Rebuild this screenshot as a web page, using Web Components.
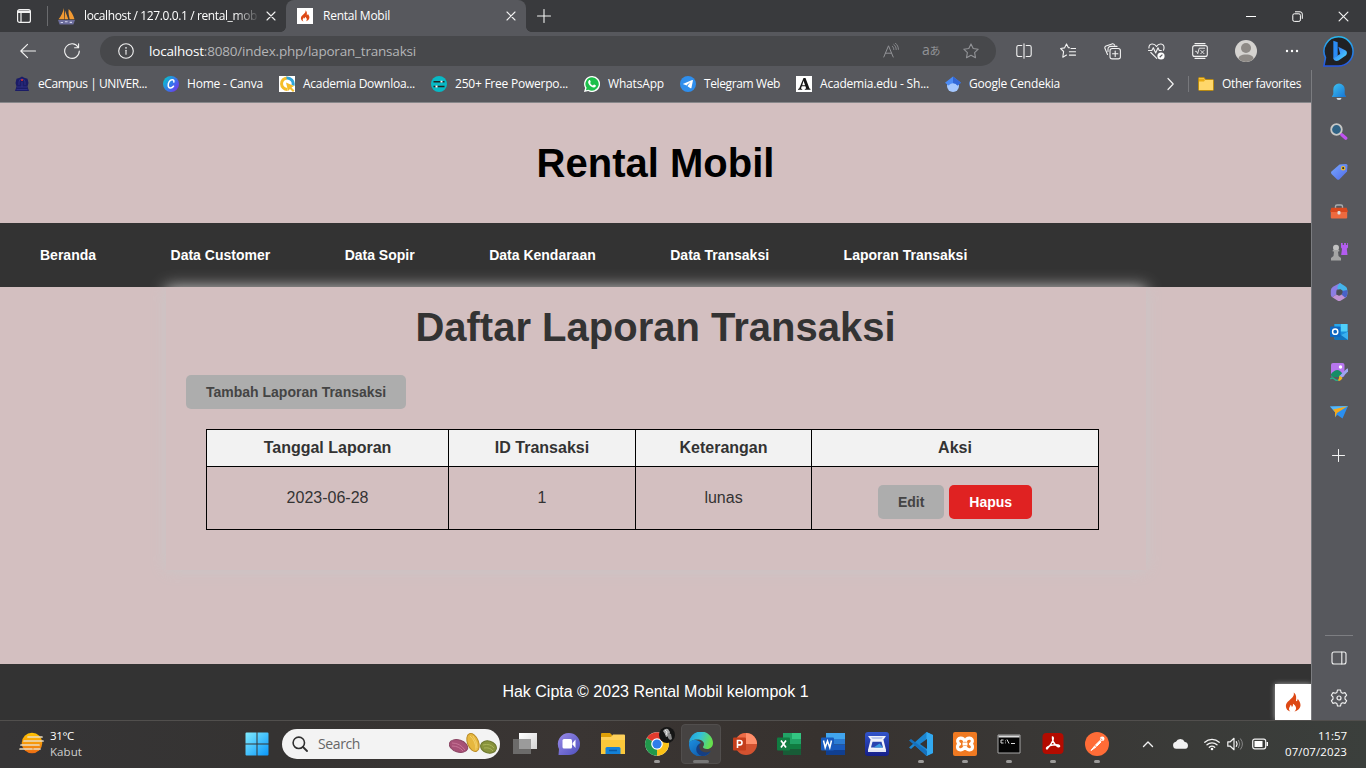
<!DOCTYPE html>
<html lang="id">
<head>
<meta charset="utf-8">
<title>Rental Mobil</title>
<style>
html,body{margin:0;padding:0}
body{width:1366px;height:768px;overflow:hidden;font-family:"Liberation Sans",Arial,sans-serif}
</style>
</head>
<body>
<desktop-screen></desktop-screen>
<script>
const define = (name, html) => customElements.define(name, class extends HTMLElement {
  connectedCallback() {
    if (this.shadowRoot) return;
    this.attachShadow({ mode: 'open' }).innerHTML = html;
  }
});

/* Icon drawings: [viewBox size, markup] */
const S = 'fill="none" stroke="#f2f2f2" stroke-linecap="round" stroke-linejoin="round"';
const ICONS = {
  tabs: [16, `<g ${S} stroke-width="1.2"><rect x="1.6" y="1.6" width="12.8" height="12.8" rx="2"/><path d="M2 4.5h12M5 4.5v10" /></g><path d="M2 2.6h12v2H2z" fill="#f2f2f2"/>`],
  close: [10, `<path d="M1 1l8 8M9 1l-8 8" ${S} stroke-width="1.1"/>`],
  plus: [14, `<path d="M7 .5v13M.5 7h13" ${S} stroke-width="1.1"/>`],
  min: [10, `<path d="M0 5.5h10" stroke="#fff" stroke-width="1"/>`],
  restore: [11, `<g fill="none" stroke="#fff"><rect x=".8" y="2.8" width="7.6" height="7.6" rx="1.5"/><path d="M3 .8h5a2.3 2.3 0 0 1 2.3 2.3v4.7"/></g>`],
  pma: [16, `<path d="M5.500 0C4.800 4 3 7.500.5 10.500H6zM6.500 2v8.500h3.200zM10 1c-.5 4 .5 7 1 9.500h4.500C14.500 7 12.500 3 10 1z" fill="#f39a32"/><path d="M0 11.200h16l-1.500 4.300h-13z" fill="#6c6d9c"/><path d="M2.500 13.700h2.200M6.500 13h2.500M11 13.500h2.200" stroke="#d4d5ee"/>`],
  flame: [16, `<path d="M8.600.3c.5 2.200-.4 3.300-2 4.900C4.900 7 2.300 8.500 2.300 11.300c0 2.100 1.500 3.700 3.600 4.300-1.300-1-1.400-2.700-.5-3.900.3-.4.6-.8.6-1.500.8.4 1.100 1.100 1 1.900.8-.6 1.200-1.600.9-2.700 1.900.8 3.500 3.700 2 5.300-.3.400-.7.700-1.100.9 3.100-.6 5.200-2.700 5.200-5.300 0-2.100-1.300-3.600-2.300-5 .1 1.100-.3 1.900-1.300 2C10.500 5.300 11.200 2.200 8.600.3z" fill="#dd4814"/>`],
  flamebox: [16, `<path d="M0 0h16v16H0z" fill="#fff"/><path transform="translate(2.200 2) scale(.73)" d="M8.600.3c.5 2.200-.4 3.300-2 4.900C4.900 7 2.300 8.500 2.300 11.300c0 2.100 1.500 3.700 3.600 4.300-1.300-1-1.400-2.700-.5-3.900.3-.4.6-.8.6-1.500.8.4 1.100 1.100 1 1.900.8-.6 1.200-1.600.9-2.700 1.900.8 3.500 3.700 2 5.300-.3.400-.7.700-1.100.9 3.100-.6 5.200-2.700 5.200-5.300 0-2.100-1.300-3.600-2.300-5 .1 1.100-.3 1.900-1.300 2C10.500 5.300 11.200 2.200 8.600.3z" fill="#dd4814"/>`],
  back: [16, `<path d="M15.500 8H.8M7.500 1.300L.8 8l6.700 6.700" ${S} stroke-width="1.1"/>`],
  reload: [16, `<path d="M14.200 4.200A7.300 7.300 0 1 0 15.300 8M14.600.8v4h-4" ${S} stroke-width="1.1"/>`],
  info: [16, `<circle cx="8" cy="8" r="7.300" ${S} stroke-width="1.100"/><path d="M8 7.200v4" ${S} stroke-width="1.100"/><circle cx="8" cy="4.900" r=".8" fill="#f2f2f2"/>`],
  read: [16, `<g fill="none" stroke="#929397" stroke-linecap="round"><path d="M.8 14L5.500 2.800 10.200 14M2.500 10.200h6"/><path d="M9.300 3.200c1 .8 1.500 2 1.500 3.300M10.800 1.500c1.600 1.300 2.400 3 2.400 5M12.400.2C14.400 1.900 15.400 4 15.400 6.400" stroke-width=".9"/></g>`],
  star: [16, `<path d="M8 .9l2.200 4.600 5 .7-3.600 3.500.9 5L8 12.300l-4.500 2.400.9-5L.8 6.200l5-.7z" fill="none" stroke="#929397" stroke-linejoin="round" stroke-width="1.100"/>`],
  split: [16, `<g ${S} stroke-width="1.100"><path d="M8 .8v14.400M5.800 2.500H2.500A1.700 1.700 0 0 0 .8 4.200v7.600a1.700 1.700 0 0 0 1.700 1.700h3.300M10.200 2.500h3.300a1.700 1.700 0 0 1 1.700 1.700v7.600a1.700 1.700 0 0 1-1.700 1.700h-3.300"/></g>`],
  favs: [16, `<path d="M9.500 4.800L8.300 4.600 6.500.9 4.500 4.900.6 5.500l3 3-.8 5.700 3.700-2.100M11 5.500h4.600M9.400 8.800h6.200M9.400 12.100h6.200" ${S} stroke-width="1.100"/>`],
  collect: [17, `<g ${S} stroke-width="1.100"><rect x="6" y="5.500" width="10.400" height="10.400" rx="2.200"/><path d="M11.200 8v5.400M8.500 10.700h5.400M3.500 11.500L1 5.500a1.900 1.900 0 0 1 1-2.500L8 .9c1.200-.3 2 .1 2.600 1.200M4 8.500V6a2.600 2.600 0 0 1 2.600-2.600H13"/></g>`],
  heart: [17, `<path d="M8.500 3.500C7.300 1.500 5.500.9 4 1 2.200 1.200.9 2.700.9 5M8.500 3.500C9.700 1.500 11.500.9 13 1c1.800.2 3.200 1.800 3 4.300 0 .8-.3 1.400-.6 2M2.800 9.500l5.900 5.800M.5 7.500h3.300l1.500-2.800 2.400 5.300 2.300-5.300 1.300 2.800h2" ${S} stroke-width="1.100"/><circle cx="13" cy="13" r="3.600" fill="#fff"/><path d="M11.700 14.200l2.700-2.600" stroke="#57585d" stroke-width="1.200"/>`],
  math: [16, `<g ${S}><rect x=".7" y="2.600" width="14.600" height="10.800" rx="2" stroke-width="1.100"/><path d="M3 .7h10M3 15.300h10" stroke-width="1.200"/><path d="M3.500 8.300h1l1.200 2.400L7.200 5.200h5.500M8.800 7.500l3.200 3.200M12 7.500l-3.200 3.200" stroke-width=".9"/></g>`],
  user: [22, `<circle cx="11" cy="11" r="11" fill="#d5d3d0"/><circle cx="11" cy="8" r="5" fill="#8e8a86"/><path d="M3.500 19c0-3 2.500-4.500 7.500-4.500s7.500 1.500 7.500 4.500A11 11 0 0 1 3.500 19z" fill="#8e8a86"/>`],
  dots: [16, `<g fill="#fff"><circle cx="3" cy="8" r="1.200"/><circle cx="8" cy="8" r="1.200"/><circle cx="13" cy="8" r="1.200"/></g>`],
  bing: [30, `<defs><linearGradient id="a" x2="0" y2="1"><stop stop-color="#28b7ee"/><stop offset="1" stop-color="#2455df"/></linearGradient><linearGradient id="b" x2="1" y2="1"><stop stop-color="#2f66f4"/><stop offset="1" stop-color="#4de1ff"/></linearGradient></defs><path d="M15 .8A14 14 0 1 1 15 29H.9l1.500-8A14 14 0 0 1 15 .8z" fill="#202124" stroke="url(#a)" stroke-width="1.500"/><path d="M10 4.500l4.200 1.600v12.700L10 22z" fill="#2a8bf5"/><path d="M14.800 10.500l6.700 3.300c2.200 1.100 2 3.800.5 5l-7 5c-2 1.200-5 0-5-2.500l6.700-3.800z" fill="url(#b)"/>`],
  campus: [16, `<path d="M8 .5l2.200 1.300 3.300 1L14.500 7l-1 3.500 1.500 4.500H1l1.500-4.500L1.500 7l1-4.200 3.300-1z" fill="#1b1c66"/><path d="M5 9V6a3 3 0 0 1 6 0v3M3 11h10M2.500 13.500h11M8 6v5" fill="none" stroke="#34358a" stroke-width=".8"/><circle cx="8" cy="4" r="1.100" fill="#d8322f"/>`],
  canva: [16, `<defs><linearGradient id="a" x1="0" y1=".2" x2="1" y2=".9"><stop stop-color="#06c4cc"/><stop offset=".55" stop-color="#3a71ed"/><stop offset="1" stop-color="#7d2ae8"/></linearGradient></defs><circle cx="8" cy="8" r="8" fill="url(#a)"/><path d="M10.800 6c.6-1.700-.7-2.600-2-2.200C6.600 4.300 5 7 5.200 9.400c.1 3.300 3.500 3.300 5.300.8" fill="none" stroke="#fff" stroke-width="1.500" stroke-linecap="round"/>`],
  acad: [16, `<path d="M0 0h16v16H0z" fill="#fff"/><path d="M8 2A5.700 5.700 0 1 0 8.500 13.400" fill="none" stroke="#f5bd29" stroke-width="3"/><path d="M7.500 2a6 6 0 0 1 6.500 7.500" fill="none" stroke="#2da4d9" stroke-width="3"/><path d="M7 6.500l8 3.500-2.500 1.500 3 3-1.500 1.500-3-3L9 15z" fill="#f5bd29"/>`],
  slides: [16, `<circle cx="8" cy="8" r="8" fill="#08b9c5"/><path d="M2.500 5.700h11M2.500 10.500h11" stroke="#222" stroke-width="1.500"/><path d="M9.500 5.700h2M4.500 10.500h2" stroke="#fff" stroke-width="1.800"/>`],
  wa: [16, `<path d="M8 0a8 8 0 1 1-3.800 15L0 16l1.100-4A8 8 0 0 1 8 0z" fill="#fff"/><path d="M8 1.300a6.700 6.700 0 1 1-3.500 12.400L1.900 14.300l.7-2.500A6.700 6.700 0 0 1 8 1.300z" fill="#1dbf4b"/><path d="M5 4.300c.8-.5 1.200-.1 1.700 1.400.2.500-.6.900-.5 1.300.5 1 1.400 1.900 2.500 2.400.5.200.9-1 1.500-.9 1.600.6 2 .9 1.500 1.900-.9 1.500-2.700 1.200-4.700 0C4.500 8.700 3.200 6 5 4.300z" fill="#fff"/>`],
  tg: [16, `<circle cx="8" cy="8" r="8" fill="#2f8eec"/><path d="M2.800 8l9.400-4c.5-.2.800.1.700.7l-1.500 7.200c-.1.500-.5.600-.9.300L6 9.300z" fill="#fff"/><path d="M6.500 9.300l4-3.300-3 4-.5 2z" fill="#2f8eec"/>`],
  aedu: [16, `<path d="M0 0h16v16H0z" fill="#fff"/><path d="M7.500 2h2l4 10.500 1 .5v.8H8.800v-.8l1.400-.4-.8-2.400H5.800l-.9 2.400 1.300.4v.8H2v-.8l1.200-.5zM7.500 4.800L6.200 9.200h2.900z" fill="#151515"/>`],
  scholar: [16, `<path d="M8 4a5 5 0 1 1 0 12A5 5 0 0 1 8 4z" fill="#a5c8ff"/><path d="M8 .5l8 6.300-3.500 2.700Q8 5 3.500 9.500L0 6.800z" fill="#4b8bf5"/><path d="M8 .5l8 6.300-3.500 2.700Q11 7 8 7z" fill="#3267d6"/>`],
  chev: [14, `<path d="M5 1.500L10.200 7 5 12.500" ${S} stroke-width="1.200"/>`],
  folder: [16, `<path d="M.5 2.500a1 1 0 0 1 1-1h4.500l1.500 2h7a1 1 0 0 1 1 1v9a1 1 0 0 1-1 1h-13a1 1 0 0 1-1-1z" fill="#ffd76b" stroke="#b88a12"/><path d="M1 2.500h5l1 1.500-1 1.500H1z" fill="#e9ab14"/>`],
  bell: [18, `<defs><linearGradient id="a" x2="1" y2="1"><stop stop-color="#3fc5f2"/><stop offset="1" stop-color="#1673d4"/></linearGradient></defs><path d="M9 .5a5.700 5.700 0 0 1 5.700 5.700v4.800l1.500 3H1.800l1.500-3V6.200A5.700 5.700 0 0 1 9 .5z" fill="url(#a)"/><path d="M6.500 15h5a2.500 2 0 0 1-5 0z" fill="#d9dfe4"/>`],
  search3: [18, `<circle cx="6.500" cy="6.500" r="5.300" fill="#2f6284" stroke="#c7c7c5" stroke-width="1.800"/><path d="M11.800 11.800l4 3.500" stroke="#c052f0" stroke-width="3.200" stroke-linecap="round"/>`],
  tag: [18, `<defs><linearGradient id="a" x2="1" y2="1"><stop stop-color="#79a8ff"/><stop offset="1" stop-color="#506be8"/></linearGradient></defs><path d="M9.500 1.500L16 1q1.500 0 1.500 1.500L17 8.500l-7.500 7.700q-1.300 1-2.600 0L1.500 11q-1.100-1.200 0-2.500z" fill="url(#a)"/><circle cx="13.200" cy="5.200" r="1.700" fill="#333" stroke="#f0bd2d" stroke-width="1.200"/>`],
  tool: [18, `<path d="M5.500 5V3.500Q5.500 2 7 2h4q1.500 0 1.500 1.500V5" fill="none" stroke="#a9adb0" stroke-width="1.400"/><path d="M1.300 4.800h15.400L18 9H0z" fill="#d9481e"/><path d="M.8 9h16.400v5.500a1 1 0 0 1-1 1H1.800a1 1 0 0 1-1-1z" fill="#ee6a3f"/><rect x="7.500" y="8" width="3" height="3.500" rx="1" fill="#ddd"/>`],
  games: [18, `<path d="M11 0h1.700v2h1.400V0h1.800v2h1.300V0H18v4.500l-1.200 1.200.7 6.300H11.200l.8-6.300-1-1.200z" fill="#b35df0"/><circle cx="6" cy="4.700" r="3" fill="#c2c2c2"/><path d="M2.700 7h6.600v1.500H8L8.500 13 11 15v2.500H1V15l2.500-2L4 8.500H2.700z" fill="#a5a5a5"/>`],
  m365: [18, `<path d="M10 0L3 3.800Q.8 5.200.8 7.500v4.300q0 1.700 1.500 2.400L6.500 11.500V7L13 3.800z" fill="#8d7de3"/><path d="M10 0l5.200 3.200Q17.300 4.500 17.300 7v4L12 8 7.500 6V3.200z" fill="#44b4ea"/><path d="M2.300 14.200L6.500 11.500l3 1.300 7.700-4v2.900q0 2-1.800 3.100l-4.400 2.700q-1.800 1-3.600 0z" fill="#c193d3"/><path d="M12 8l5.300-1v4.800q-.3 2-2.100 3L12 12z" fill="#4962c8"/><path d="M6.500 8.500L10 6l2.500 1.500v2.500L8.500 12.500l-2-1z" fill="#4d4e55"/>`],
  outlook: [18, `<path d="M4.500 1h13v15h-13z" fill="#1a91dd"/><path d="M4.500 1h6.500v7.500H4.500z" fill="#28a8ea"/><path d="M11 1h6.500v7.500H11z" fill="#50d0fa"/><path d="M4.500 9l6.500 3 7-3.500V16a1 1 0 0 1-1 1H4.500z" fill="#1273bd"/><path d="M11 12l7-3.500V17z" fill="#39b0f0"/><rect y="3.500" width="10.500" height="10.500" rx="1" fill="#0d66c1"/><circle cx="5.200" cy="8.700" r="2.600" fill="none" stroke="#fff" stroke-width="1.500"/>`],
  image: [18, `<rect x="1" y="0" width="13.500" height="14" rx="2" fill="#b776ee"/><path d="M1 11q5-6 9-3l3 3-1 3H3q-2 0-2-2z" fill="#168d66"/><circle cx="10.500" cy="4" r="1.700" fill="#fff"/><path d="M17.500 7L11 13.500" stroke="#9da6f0" stroke-width="3" stroke-linecap="round"/><path d="M9.500 12.500l3 2.500q-2 4-5 2.500 1.500-1 2-5z" fill="#f2b31b"/><path d="M.3 16q2-2 4 0t4 1" fill="none" stroke="#26b18b" stroke-width="1.300"/>`],
  drop: [18, `<path d="M0 3.500l18-.5-5.500 12.500-5-3.500L5 14V9z" fill="#2a8ff0"/><path d="M0 3.500l18-.5L5 9z" fill="#55b7f8"/><path d="M17.500 3.200L3 6.500l2 2.500v5.500l2-4.500z" fill="#f5a91b"/>`],
  panel: [16, `<g ${S} stroke-width="1.100"><rect x="1" y="2" width="14" height="12" rx="2"/><path d="M10.800 2v12"/></g>`],
  gear: [18, `<path d="M7.500 1h3l.6 2.400 1.600.9L15 3.600l1.700 2.600L15 8v2l1.700 1.800-1.700 2.600-2.300-.7-1.600.9-.6 2.400h-3l-.6-2.400-1.600-.9-2.300.7-1.700-2.600L3 10V8L1.300 6.200 3 3.600l2.300.7 1.600-.9z" ${S} stroke-width="1.100"/><circle cx="9" cy="9" r="2" ${S} stroke-width="1.200"/>`],
  fog: [26, `<defs><linearGradient id="a" x2="0" y2="1"><stop stop-color="#ffc400"/><stop offset="1" stop-color="#ed6d14"/></linearGradient></defs><circle cx="13" cy="12" r="10.300" fill="url(#a)"/><path d="M9 6h14M5 10h19M2 14h18M1 18h12M15 18h6" stroke="#eadcc0" stroke-width="1.700" stroke-linecap="round"/>`],
  win: [24, `<defs><linearGradient id="a" gradientUnits="userSpaceOnUse" x1="0" y1="0" x2="24" y2="24"><stop stop-color="#83edff"/><stop offset="1" stop-color="#0795fa"/></linearGradient></defs><path d="M.5 1.500q0-1 1-1h10v11H.5zM12.500.5h10q1 0 1 1v10h-11zM.5 12.500h11v11h-10q-1 0-1-1zM12.500 12.500h11v10q0 1-1 1h-10z" fill="url(#a)"/>`],
  mag: [16, `<circle cx="6.800" cy="6.800" r="5.700" fill="none" stroke="#303030" stroke-width="1.600"/><path d="M11 11l4 4" stroke="#303030" stroke-width="1.800" stroke-linecap="round"/>`],
  task: [24, `<defs><linearGradient id="a" x2="1" y2="1"><stop stop-color="#fff"/><stop offset="1" stop-color="#d4d4d4"/></linearGradient></defs><path d="M6 1h18v16H6z" fill="url(#a)"/><path d="M0 7h18v15H0z" fill="#6c6b6a"/><path d="M6 7h12v10H6z" fill="#9b9b9b"/>`],
  chat: [24, `<defs><linearGradient id="a" x2="1" y2="1"><stop stop-color="#9a8be8"/><stop offset="1" stop-color="#4e50bd"/></linearGradient></defs><path d="M12 1a11 11 0 1 1 0 22H1.500l.5-6A11 11 0 0 1 12 1z" fill="url(#a)"/><rect x="5.500" y="7" width="9.500" height="9.500" rx="1.500" fill="#fff"/><path d="M15.500 11l3-3.500v8.500l-3-3.500z" fill="#fff"/>`],
  files: [24, `<path d="M0 2q0-1 1-1h8l2 2v4H0z" fill="#dfa008"/><path d="M0 5h10l2-2.500h11q1 0 1 1V22H0z" fill="#fdd05a"/><path d="M0 8h24v13q0 1-1 1H1q-1 0-1-1z" fill="#fbc83a"/><path d="M4.500 22v-5.500q0-1.500 1.500-1.500h12q1.500 0 1.500 1.500V22z" fill="#1381d8"/><path d="M8 18.500h8" stroke="#0a5aa5" stroke-width="1.500"/>`],
  chrome: [24, `<circle cx="12" cy="12" r="11.800" fill="#fff"/><path d="M12 12L1.800 6A11.800 11.800 0 0 1 22.200 6z" fill="#e23b2e"/><path d="M12 12L22.200 6A11.800 11.800 0 0 1 12 23.800z" fill="#fbc116"/><path d="M12 12v11.800A11.800 11.800 0 0 1 1.800 6z" fill="#21984b"/><circle cx="12" cy="12" r="5.800" fill="#fff"/><circle cx="12" cy="12" r="4.600" fill="#2f7de9"/>`],
  avatar: [16, `<circle cx="8" cy="8" r="8" fill="#151515"/><path d="M4 4q2-3 5-2l2 3-1 4-3 1-1-3z" fill="#aaa"/><path d="M9 6l3 1 1 5-2 1-2-2z" fill="#8a8a8a"/><path d="M6 3l2 2-1 3" fill="none" stroke="#e5e5e5"/>`],
  edge: [24, `<defs><linearGradient id="a" x2="1" y2=".3"><stop stop-color="#1b9de2"/><stop offset=".5" stop-color="#35c1d8"/><stop offset="1" stop-color="#66e04e"/></linearGradient><linearGradient id="b" x2="1" y2="1"><stop stop-color="#1b8ee0"/><stop offset="1" stop-color="#0d4d9a"/></linearGradient></defs><path d="M0 12A12 12 0 0 1 24 11c0 3.500-2.500 6-6 6-3 0-4-1.200-4-2 0-.5 1-1 1-3 0-2.500-3-4.500-6.500-4.500C4 7.500.3 9.500 0 12z" fill="url(#a)"/><path d="M0 12C.3 9 4 7.300 7.800 8.200 10.500 8.800 12 11 12 11c-5 2-4 9.500 2 11.500 2 .5 6-.5 8.500-4A12 12 0 0 1 0 12z" fill="url(#b)"/><path d="M12 11c-3 2-2.500 9 5 9.500 2 0 3.500-.7 5-2C20 22 17 24 13 24 5 22 6 12.500 12 11z" fill="#153f83"/>`],
  ppt: [24, `<circle cx="13" cy="12" r="11" fill="#d35230"/><path d="M13 1a11 11 0 0 1 11 11H13z" fill="#ff8f6b"/><path d="M13 1A11 11 0 0 0 2 12h11z" fill="#ed6c47"/><rect y="5.500" width="13" height="13" rx="1" fill="#c43e1c"/><path d="M4.500 16V8.500h2.300q2.200 0 2.200 2.200t-2.200 2.200H4.500" fill="none" stroke="#fff" stroke-width="1.600"/>`],
  xls: [24, `<path d="M6 1h18v22H6z" fill="#21a366"/><path d="M15 1h9v6h-9z" fill="#33c481"/><path d="M6 12h18v11H6z" fill="#107c41"/><path d="M6 17h18v6H6z" fill="#185c37"/><rect y="5.500" width="13" height="13" rx="1" fill="#107c41"/><path d="M4 8.500l5 7M9 8.500l-5 7" stroke="#fff" stroke-width="1.700"/>`],
  doc: [24, `<path d="M5 1h19v6H5z" fill="#41a5ee"/><path d="M5 7h19v5.500H5z" fill="#2b7cd3"/><path d="M5 12.500h19V18H5z" fill="#185abd"/><path d="M5 18h19v5H5z" fill="#103f91"/><rect y="5.500" width="13" height="13" rx="1" fill="#185abd"/><path d="M2.500 8.500l1.700 7 2.300-6.500 2.300 6.500 1.700-7" fill="none" stroke="#fff" stroke-width="1.500"/>`],
  scan: [24, `<defs><linearGradient id="a" x2="0" y2="1"><stop stop-color="#3255cc"/><stop offset="1" stop-color="#151f88"/></linearGradient></defs><rect width="24" height="24" rx="3" fill="url(#a)"/><path d="M3 4h18l-3.500 5h-11z" fill="#eef1fa"/><path d="M6 5h12l-1.500 2h-9z" fill="#b9c6ee"/><path d="M5.500 8h13L21 18H3z" fill="#f2f4fb"/><path d="M7.500 9.800h9L18 15.500H6z" fill="#2a45b0"/><path d="M8.500 15.500l6-4 3.500 4z" fill="#3d9ce0"/><path d="M3 17.500h18v2.500H3z" fill="#e3e7f5"/>`],
  code: [24, `<path d="M17.500 0L24 3v18l-6.500 3L6 13.500 2 17l-2-1.500L14 3z" fill="#1c86d1"/><path d="M17.500 0L24 3v18l-6.500 3z" fill="#32a9f0"/><path d="M0 8.500L2 7l16 12v5z" fill="#1671bd"/><path d="M18 7v10l-7-5z" fill="#363433"/>`],
  xampp: [24, `<rect width="24" height="24" rx="2" fill="#f07a22"/><path d="M12 9.500Q10.500 6 7.500 6.200 4.300 6.500 4.700 9.500 5 11.500 6.500 12 4.500 12.800 4.500 15 4.700 18 7.800 17.800 10.500 17.600 12 14.500M12 9.500Q13.500 6 16.500 6.200 19.700 6.500 19.300 9.500 19 11.500 17.500 12 19.500 12.800 19.500 15 19.300 18 16.200 17.800 13.500 17.600 12 14.500M9.500 12h5" fill="none" stroke="#fff" stroke-width="3.200" stroke-linejoin="round"/>`],
  cmd: [24, `<path d="M1 3h22v18H1z" fill="#050505" stroke="#a7a7a7"/><path d="M1.500 3.500h21v2h-21z" fill="#ddd"/><path d="M6.500 8H4v3h2.500M8.500 8.500v.8M8.500 10.500v.8M10 7.500l2 4M14 11.500h4" fill="none" stroke="#ddd" stroke-width="1"/>`],
  pdf: [24, `<rect x="1.500" y="1" width="21" height="21" rx="4" fill="#b30b00"/><path d="M11.500 5c2 0 .5 6-5.500 12-2-1 2-3.500 6-4s7 0 6.500 1.500C17 16 11 11 11.500 5z" fill="none" stroke="#fff" stroke-width="1.400"/>`],
  postman: [24, `<circle cx="12" cy="12" r="12" fill="#ff6c37"/><circle cx="17.200" cy="6.700" r="2.300" fill="#fff"/><path d="M15 8.500L10 13.500 6 18.500 11 15l5-5z" fill="#fff" stroke="#fff" stroke-width="1"/><path d="M9.500 13l2 2M15.500 6.500l2 1.500" stroke="#ff6c37" stroke-width=".8"/>`],
  up: [12, `<path d="M1.500 8.500L6 4l4.500 4.500" ${S} stroke-width="1.400"/>`],
  cloud: [16, `<path d="M4 13a3.400 3.400 0 0 1-.3-6.700A4.600 4.600 0 0 1 12 6.500 3.300 3.300 0 0 1 12.500 13z" fill="#f2f2f2"/>`],
  wifi: [16, `<path d="M.8 6.200a10.500 10.500 0 0 1 14.400 0M3 8.800a7.300 7.300 0 0 1 10 0M5.300 11.300a4 4 0 0 1 5.400 0" ${S} stroke-width="1.300"/><circle cx="8" cy="13" r="1.300" fill="#fff"/>`],
  sound: [16, `<path d="M.8 5.800h2.500L7 2.300v11.400L3.300 10.200H.8zM9.300 5.700q1.600 2.300 0 4.600" ${S} stroke-width="1.200"/><path d="M11.300 4q3 4 0 8M13.300 2.500q4.200 5.500 0 11" fill="none" stroke="#888"/>`],
  batt: [16, `<rect x=".7" y="3.200" width="13" height="9.600" rx="2" ${S} stroke-width="1.200"/><path d="M2.500 5h8v6h-8z" fill="#fff"/><path d="M15.300 6v4" stroke="#fff" stroke-width="1.500"/>`],
  cocoa: [48, `<g stroke-width="1"><ellipse cx="9.500" cy="27" rx="9.500" ry="6" transform="rotate(18 9.500 27)" fill="#a75076" stroke="#8a4463"/><path d="M3 24q8 0 13 7M3 27q7 0 11 5" stroke="#c77496" fill="none"/><ellipse cx="24" cy="23.500" rx="5.500" ry="9.500" transform="rotate(-22 24 23.500)" fill="#e6b73e" stroke="#b98c28"/><path d="M21 17q6 5 6 14M24 17q4 6 4 12" stroke="#f3d06a" fill="none"/><ellipse cx="39.500" cy="28" rx="8" ry="6" transform="rotate(15 39.500 28)" fill="#88933c" stroke="#6c762e"/><path d="M34 26q7-2 11 3M35 29q6-1 9 3" stroke="#aab35a" fill="none"/></g>`]
};
customElements.define('ui-icon', class extends HTMLElement {
  connectedCallback() {
    if (this.shadowRoot) return;
    const [v, g] = ICONS[this.getAttribute('name')];
    const s = this.getAttribute('size') || v;
    this.attachShadow({ mode: 'open' }).innerHTML =
      `<style>:host{display:block;flex:none;width:${s}px;height:${s}px}svg{display:block}</style><svg width="${s}" height="${s}" viewBox="0 0 ${v} ${v}">${g}</svg>`;
  }
});

/* One line of text whose tracking is adjusted to a given width */
customElements.define('fit-text', class extends HTMLElement {
  connectedCallback() {
    if (this.shadowRoot) return;
    this.attachShadow({ mode: 'open' }).innerHTML =
      `<style>:host{display:block;flex:none;width:max-content;white-space:nowrap}</style><slot></slot>`;
    const w = +this.getAttribute('w'), n = this.textContent.length;
    const d = (w - this.getBoundingClientRect().width) / n;
    this.style.letterSpacing = d.toFixed(3) + 'px';
    this.style.width = w + 'px';
  }
});

define('icon-slot', `<style>:host{display:flex;flex:none;width:var(--w,44px);height:var(--h,100%);align-items:center;justify-content:center}</style><slot></slot>`);

define('tab-strip', `<style>
:host{display:flex;height:32px;background:#393a3d;align-items:center;color:#fff;font-size:12px}
.sep{width:1px;height:20px;background:#6a6b6e}
.t{display:flex;align-items:center;height:32px;box-sizing:border-box}
fit-text{padding-bottom:1px}
.one{width:238px;padding-left:10px}
.one fit-text{margin-left:9px;-webkit-mask:linear-gradient(90deg,#000 150px,transparent 176px);mask:linear-gradient(90deg,#000 150px,transparent 176px)}
.one ui-icon:last-child{margin-left:9px}
.two{width:240px;padding:0 10px 0 11px;background:#57585d;border-radius:8px 8px 0 0;position:relative}
.two::before,.two::after{content:"";position:absolute;bottom:0;width:5px;height:5px}
.two::before{left:-5px;background:radial-gradient(circle at 0 0,transparent 4.500px,#57585d 5px)}
.two::after{right:-5px;background:radial-gradient(circle at 100% 0,transparent 4.500px,#57585d 5px)}
.two fit-text{margin-left:10px}.two ui-icon:last-child{margin-left:auto}
.w{display:flex;margin-left:auto;--w:46px;height:32px}
</style>
<icon-slot style="--w:47px"><ui-icon name="tabs"></ui-icon></icon-slot><div class="sep"></div>
<div class="t one"><ui-icon name="pma" size="17"></ui-icon><fit-text w="173">localhost / 127.0.0.1 / rental_mob</fit-text><ui-icon name="close"></ui-icon></div>
<div class="t two"><ui-icon name="flamebox"></ui-icon><fit-text w="67">Rental Mobil</fit-text><ui-icon name="close"></ui-icon></div>
<icon-slot style="--w:35px"><ui-icon name="plus"></ui-icon></icon-slot>
<div class="w"><icon-slot><ui-icon name="min"></ui-icon></icon-slot><icon-slot><ui-icon name="restore"></ui-icon></icon-slot><icon-slot><ui-icon name="close" size="11"></ui-icon></icon-slot></div>`);

define('tool-bar', `<style>
:host{display:flex;height:38px;background:#57585d;align-items:center;padding-left:6px}
.pill{display:flex;align-items:center;width:896px;height:30px;border-radius:15px;background:#47484b;margin:0 6px;box-sizing:border-box;padding-left:18px;color:#b4b5b7;font-size:13.500px}
.pill fit-text{margin-left:15px}b{font-weight:400;color:#fff}
.r{display:flex;height:30px;margin-left:auto;--w:40px;padding-right:5px}
.aa{font:14px/16px "Open Sans","Noto Sans CJK JP",sans-serif;color:#929397;letter-spacing:-.5px;white-space:nowrap;height:19px}.aa span{font-size:11px}
</style>
<icon-slot><ui-icon name="back"></ui-icon></icon-slot><icon-slot><ui-icon name="reload"></ui-icon></icon-slot>
<div class="pill"><ui-icon name="info"></ui-icon><fit-text w="267"><b>localhost</b>:8080/index.php/laporan_transaksi</fit-text>
<div class="r"><icon-slot><ui-icon name="read"></ui-icon></icon-slot><icon-slot><div class="aa">a<span>あ</span></div></icon-slot><icon-slot><ui-icon name="star"></ui-icon></icon-slot></div></div>
<icon-slot><ui-icon name="split"></ui-icon></icon-slot><icon-slot><ui-icon name="favs"></ui-icon></icon-slot><icon-slot><ui-icon name="collect"></ui-icon></icon-slot><icon-slot><ui-icon name="heart"></ui-icon></icon-slot><icon-slot><ui-icon name="math"></ui-icon></icon-slot><icon-slot style="--w:48px"><ui-icon name="user"></ui-icon></icon-slot><icon-slot><ui-icon name="dots"></ui-icon></icon-slot><icon-slot style="--w:46px;margin-left:1px"><ui-icon name="bing" size="31"></ui-icon></icon-slot>`);

define('fav-item', `<style>:host{display:flex;gap:8px;align-items:center;flex:none}::slotted(fit-text){margin-top:-2px}</style><slot name="icon"></slot><slot></slot>`);
const fav = (i, w, t) => `<fav-item><ui-icon slot="icon" name="${i}" size="16"></ui-icon><fit-text w="${w}">${t}</fit-text></fav-item>`;
define('fav-bar', `<style>
:host{display:flex;height:33px;box-sizing:border-box;border-bottom:1px solid #87878a;background:#57585d;align-items:center;gap:16px;padding:0 10px 4px 14px;color:#fff;font-size:12px}
.end{display:flex;align-items:center;margin-left:auto}.sep{width:1px;height:16px;background:#77787c;margin:0 9px 0 11px}
</style>${fav('campus',109,'eCampus | UNIVER...')}${fav('canva',76,'Home - Canva')}${fav('acad',112,'Academia Downloa...')}${fav('slides',113,'250+ Free Powerpo...')}${fav('wa',56,'WhatsApp')}${fav('tg',76,'Telegram Web')}${fav('aedu',109,'Academia.edu - Sh...')}${fav('scholar',91,'Google Cendekia')}
<div class="end"><ui-icon name="chev"></ui-icon><div class="sep"></div>${fav('folder',79,'Other favorites')}</div>`);

define('side-bar', `<style>
:host{display:flex;flex-direction:column;align-items:center;width:55px;box-sizing:border-box;border-left:1px solid #7b7c80;background:#57585d;padding-top:2px;--h:40px}
.app{padding-right:1px}
.line{width:28px;height:1px;background:#7d7e82;margin-top:auto;margin-bottom:2px}.last{margin-bottom:2px}
</style>${['bell','search3','tag','tool','games','m365','outlook','image','drop'].map(n => `<icon-slot class="app"><ui-icon name="${n}"></ui-icon></icon-slot>`).join('')}
<icon-slot class="app" style="--h:47px"><ui-icon name="plus" size="13"></ui-icon></icon-slot>
<div class="line"></div><icon-slot><ui-icon name="panel"></ui-icon></icon-slot><icon-slot class="last"><ui-icon name="gear"></ui-icon></icon-slot>`);

define('action-button', `<style>
:host{display:inline-block;box-sizing:border-box;height:34px;line-height:34px;padding:0 20px;border-radius:5px;background:#adadad;color:#444;font-weight:700;font-size:14px}
:host([danger]){background:#e02222;color:#fff}
</style><slot></slot>`);

define('report-table', `<style>
:host{display:block;margin:20px 0 0 20px}
table{width:893px;table-layout:fixed;border-collapse:collapse;color:#333;font-size:16px;text-align:center}
th,td{border:1px solid #000;padding:0 0 0 1px}
th{height:36px;background:#f2f2f2}td{height:62px}
.act{display:flex;gap:5px;justify-content:center;padding-top:8px}
</style><table><colgroup><col style="width:242px"><col style="width:187px"><col style="width:176px"><col></colgroup>
<tr><th>Tanggal Laporan</th><th>ID Transaksi</th><th>Keterangan</th><th>Aksi</th></tr>
<tr><td>2023-06-28</td><td>1</td><td>lunas</td><td><div class="act"><action-button>Edit</action-button><action-button danger>Hapus</action-button></div></td></tr></table>`);

define('rental-page', `<style>
:host{display:flex;flex-direction:column;width:1311px;height:617px;background:#d3bfc0;position:relative;overflow:hidden}
header{height:120px;text-align:center}
h1{margin:0;font-size:40px;line-height:46px}
header h1{padding-top:37px;color:#000}
nav{display:flex;flex:none;height:64px;background:#333;align-items:center;gap:74.500px;padding-left:40px;color:#fff;font-size:14px;font-weight:700}
main{width:980px;height:283px;box-sizing:border-box;margin:0 auto;padding:17px 20px 0;box-shadow:0 0 15px #c9c7c7}
main h1{color:#333;text-align:center;margin-bottom:25px}
footer{margin-top:auto;height:56px;line-height:55px;background:#333;color:#fff;text-align:center;font-size:16px}
.debug{position:absolute;right:0;bottom:0;width:36px;height:36px;background:#fff;box-shadow:0 0 5px #aaa;display:flex;align-items:center;justify-content:center}
main>action-button{display:block;width:220px;white-space:nowrap;padding-left:20.500px}
</style>
<header><h1>Rental Mobil</h1></header>
<nav><span>Beranda</span><span>Data Customer</span><span>Data Sopir</span><span>Data Kendaraan</span><span>Data Transaksi</span><span>Laporan Transaksi</span></nav>
<main><h1>Daftar Laporan Transaksi</h1><action-button>Tambah Laporan Transaksi</action-button><report-table></report-table></main>
<footer>Hak Cipta © 2023 Rental Mobil kelompok 1</footer>
<div class="debug"><ui-icon name="flame" size="20"></ui-icon></div>`);

define('task-icon', `<style>
:host{display:flex;flex:none;width:44px;height:47px;align-items:center;justify-content:center;position:relative}
:host([active])::before{content:"";position:absolute;inset:3px 2px 4px;background:#464342;border:1px solid #514e4d;border-radius:4px;box-sizing:border-box}
:host([run])::after{content:"";position:absolute;left:19px;bottom:5px;width:6px;height:3px;border-radius:2px;background:#9b9a99}
:host([active])::after{left:14px;width:16px;background:#777}
::slotted(*){position:relative;top:-.5px}
::slotted(.badge){position:absolute;left:24px;top:6px}
</style><slot></slot>`);
const task = (n, a = '', x = '') => `<task-icon ${a}><ui-icon name="${n}" size="24"></ui-icon>${x}</task-icon>`;
define('task-bar', `<style>
:host{display:flex;height:48px;box-sizing:border-box;border-top:1px solid #514f4d;background:linear-gradient(90deg,#363536 0,#353332 20%,#3a3533 42%,#37322f 60%,#393735 75%,#3b3f3c 100%);align-items:center;color:#fff;font-size:11.500px}
.weather{display:flex;width:226px;padding-left:19px;box-sizing:border-box;align-items:center;gap:5px;line-height:16px}
.weather>div{margin-top:-2px}.weather>ui-icon{margin-top:-1px}
.k{color:#cfcfcf}
.search{display:flex;align-items:center;width:218px;height:30px;box-sizing:border-box;border-radius:15px;background:#f3f3f3;padding:0 3px 0 10px;margin:-1px 3px 0 3px;color:#666;font-size:14px}
.search fit-text{margin:-2px 0 0 10px}.search ui-icon:last-child{margin-left:auto;margin-top:-2px}
.start{margin-left:9px}
.tray{display:flex;margin-left:auto;align-items:center;height:47px}.tray icon-slot{margin-top:-2px}
.clock{width:71px;margin:-2px 19px 0 0;line-height:16px}.clock fit-text{margin-left:auto}
</style>
<div class="weather"><ui-icon name="fog" size="26"></ui-icon><div><fit-text w="24">31°C</fit-text><fit-text class="k" w="32">Kabut</fit-text></div></div>
<task-icon class="start"><ui-icon name="win" size="24"></ui-icon></task-icon>
<div class="search"><ui-icon name="mag"></ui-icon><fit-text w="42">Search</fit-text><ui-icon name="cocoa"></ui-icon></div>
${task('task')}${task('chat')}${task('files')}${task('chrome','run','<ui-icon class="badge" name="avatar" size="16"></ui-icon>')}${task('edge','run active')}${task('ppt')}${task('xls')}${task('doc')}${task('scan')}${task('code','run')}${task('xampp','run')}${task('cmd','run')}${task('pdf','run')}${task('postman','run')}
<div class="tray"><icon-slot style="--w:32px"><ui-icon name="up"></ui-icon></icon-slot><icon-slot style="--w:32px"><ui-icon name="cloud" size="17"></ui-icon></icon-slot><icon-slot style="--w:31px"><ui-icon name="wifi"></ui-icon></icon-slot><icon-slot style="--w:16px"><ui-icon name="sound"></ui-icon></icon-slot><icon-slot style="--w:33px"><ui-icon name="batt"></ui-icon></icon-slot>
<div class="clock"><fit-text w="29">11:57</fit-text><fit-text w="62">07/07/2023</fit-text></div></div>`);

define('desktop-screen', `<style>
:host{display:flex;flex-direction:column;width:1366px;height:768px;overflow:hidden;background:#57585d}
tab-strip,tool-bar,task-bar,fav-bar{font-family:"Open Sans","Noto Sans",sans-serif}
.mid{display:flex;height:650px}
</style><tab-strip></tab-strip><tool-bar></tool-bar><div class="mid"><div><fav-bar></fav-bar><rental-page></rental-page></div><side-bar></side-bar></div><task-bar></task-bar>`);
</script>
</body>
</html>
